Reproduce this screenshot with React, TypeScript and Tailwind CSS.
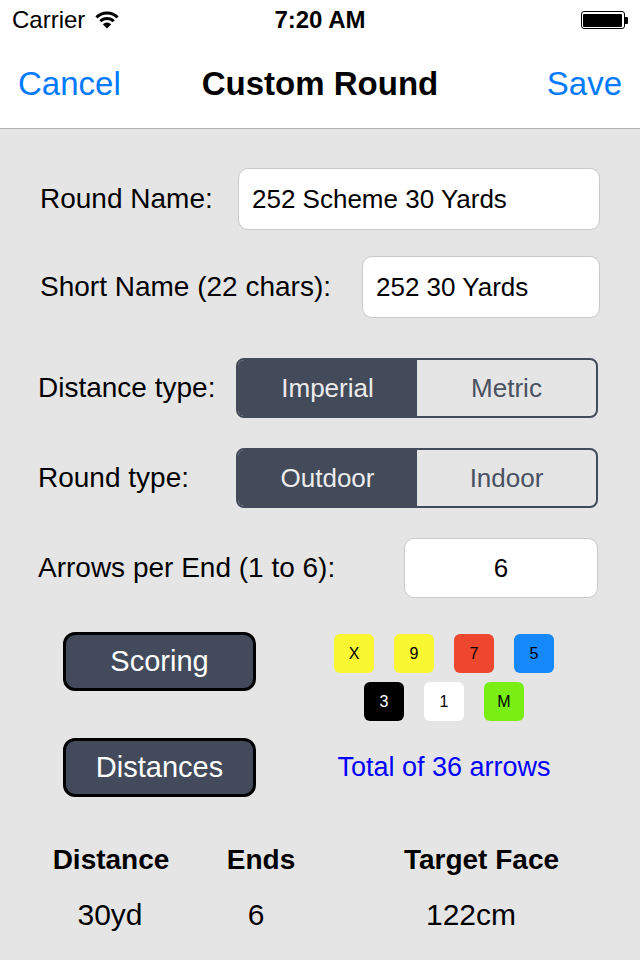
import React from "react";

const font = { fontFamily: '"Liberation Sans", Arial, sans-serif' };

function Wifi() {
  return (
    <svg width="26" height="18" viewBox="0 0 26 18" className="ml-[9px]">
      <path d="M2.4 6.4 A15 15 0 0 1 23.6 6.4" fill="none" stroke="#000" strokeWidth="3" />
      <path d="M6.3 10.3 A9.5 9.5 0 0 1 19.7 10.3" fill="none" stroke="#000" strokeWidth="3" />
      <path d="M13 17.5 L8.8 13.3 A6 6 0 0 1 17.2 13.3 Z" fill="#000" />
    </svg>
  );
}

function Battery() {
  return (
    <div className="flex items-center">
      <div className="w-[44px] h-[18px] rounded-[3px] border-[1.5px] border-black p-[1.5px] flex">
        <div className="flex-1 bg-black rounded-[1px]" />
      </div>
      <div className="w-[3px] h-[7px] bg-black rounded-r-[1px]" />
    </div>
  );
}

function Segmented({ left, right }: { left: string; right: string }) {
  return (
    <div className="w-[362px] h-[60px] flex rounded-[8px] border-2 border-[#434a5a] overflow-hidden">
      <div className="flex-1 bg-[#434a5a] text-[#ececec] text-[26px] flex items-center justify-center">
        {left}
      </div>
      <div className="flex-1 text-[#4a5162] text-[26px] flex items-center justify-center">
        {right}
      </div>
    </div>
  );
}

function Chip({ label, bg, fg }: { label: string; bg: string; fg: string }) {
  return (
    <div
      className={`w-[40px] h-[39px] rounded-[6px] flex items-center justify-center text-[16px] ${bg} ${fg}`}
    >
      {label}
    </div>
  );
}

export default function App() {
  return (
    <div className="w-[640px] h-[960px] bg-[#e5e5e5] text-black overflow-hidden" style={font}>
      {/* status bar */}
      <div className="h-[40px] bg-white flex items-center justify-between pl-[12px] pr-[12px]">
        <div className="flex items-center w-[200px]">
          <span className="text-[24px] leading-none">Carrier</span>
          <Wifi />
        </div>
        <span className="text-[24px] font-bold leading-none">7:20 AM</span>
        <div className="w-[200px] flex justify-end">
          <Battery />
        </div>
      </div>
      {/* nav bar */}
      <div className="h-[89px] bg-white border-b border-[#b2b2b2] flex items-center px-[18px]">
        <div className="flex-1 text-[33px] text-[#007aff]">Cancel</div>
        <div className="text-[33px] font-bold">Custom Round</div>
        <div className="flex-1 text-[33px] text-[#007aff] text-right">Save</div>
      </div>

      {/* form */}
      <div className="mt-[39px] pl-[40px] pr-[40px] flex items-center justify-between">
        <span className="text-[28px]">Round Name:</span>
        <div className="w-[362px] h-[62px] bg-white rounded-[10px] border border-[#c9c9c9] flex items-center pl-[13px] text-[26px]">
          252 Scheme 30 Yards
        </div>
      </div>
      <div className="mt-[26px] pl-[40px] pr-[40px] flex items-center justify-between">
        <span className="text-[28px]">Short Name (22 chars):</span>
        <div className="w-[238px] h-[62px] bg-white rounded-[10px] border border-[#c9c9c9] flex items-center pl-[13px] text-[26px]">
          252 30 Yards
        </div>
      </div>
      <div className="mt-[40px] pl-[38px] pr-[42px] flex items-center justify-between">
        <span className="text-[28px]">Distance type:</span>
        <Segmented left="Imperial" right="Metric" />
      </div>
      <div className="mt-[30px] pl-[38px] pr-[42px] flex items-center justify-between">
        <span className="text-[28px]">Round type:</span>
        <Segmented left="Outdoor" right="Indoor" />
      </div>
      <div className="mt-[30px] pl-[38px] pr-[42px] flex items-center justify-between">
        <span className="text-[28px]">Arrows per End (1 to 6):</span>
        <div className="w-[194px] h-[60px] bg-white rounded-[10px] border border-[#c9c9c9] flex items-center justify-center text-[26px]">
          6
        </div>
      </div>

      {/* scoring row */}
      <div className="mt-[34px] flex items-start">
        <div className="w-[288px] pl-[63px]">
          <div className="w-[193px] h-[59px] rounded-[12px] border-[3px] border-black bg-[#424a5b] text-white text-[29px] flex items-center justify-center">
            Scoring
          </div>
        </div>
        <div className="w-[312px] mt-[2px] flex flex-col items-center gap-[9px]">
          <div className="flex gap-[20px]">
            <Chip label="X" bg="bg-[#f8f731]" fg="text-black" />
            <Chip label="9" bg="bg-[#f8f731]" fg="text-black" />
            <Chip label="7" bg="bg-[#ee4730]" fg="text-black" />
            <Chip label="5" bg="bg-[#1589fa]" fg="text-black" />
          </div>
          <div className="flex gap-[20px]">
            <Chip label="3" bg="bg-black" fg="text-white" />
            <Chip label="1" bg="bg-white" fg="text-black" />
            <Chip label="M" bg="bg-[#78ee12]" fg="text-black" />
          </div>
        </div>
      </div>
      <div className="mt-[17px] flex items-center">
        <div className="w-[288px] pl-[63px]">
          <div className="w-[193px] h-[59px] rounded-[12px] border-[3px] border-black bg-[#424a5b] text-white text-[29px] flex items-center justify-center">
            Distances
          </div>
        </div>
        <div className="w-[312px] flex justify-center text-[27px] text-[#0000ff]">
          Total of 36 arrows
        </div>
      </div>

      {/* table */}
      <div className="mt-[47px] pl-[40px] grid grid-cols-[142px_152px_284px] text-[28px] font-bold leading-[32px]">
        <div className="text-center">Distance</div>
        <div className="text-center ml-[6px]">Ends</div>
        <div className="text-center ml-[11px]">Target Face</div>
      </div>
      <div className="mt-[22px] pl-[40px] grid grid-cols-[142px_152px_284px] text-[30px] leading-[34px]">
        <div className="text-center -ml-[2px]">30yd</div>
        <div className="text-center -ml-[4px]">6</div>
        <div className="text-center -ml-[10px]">122cm</div>
      </div>
    </div>
  );
}
